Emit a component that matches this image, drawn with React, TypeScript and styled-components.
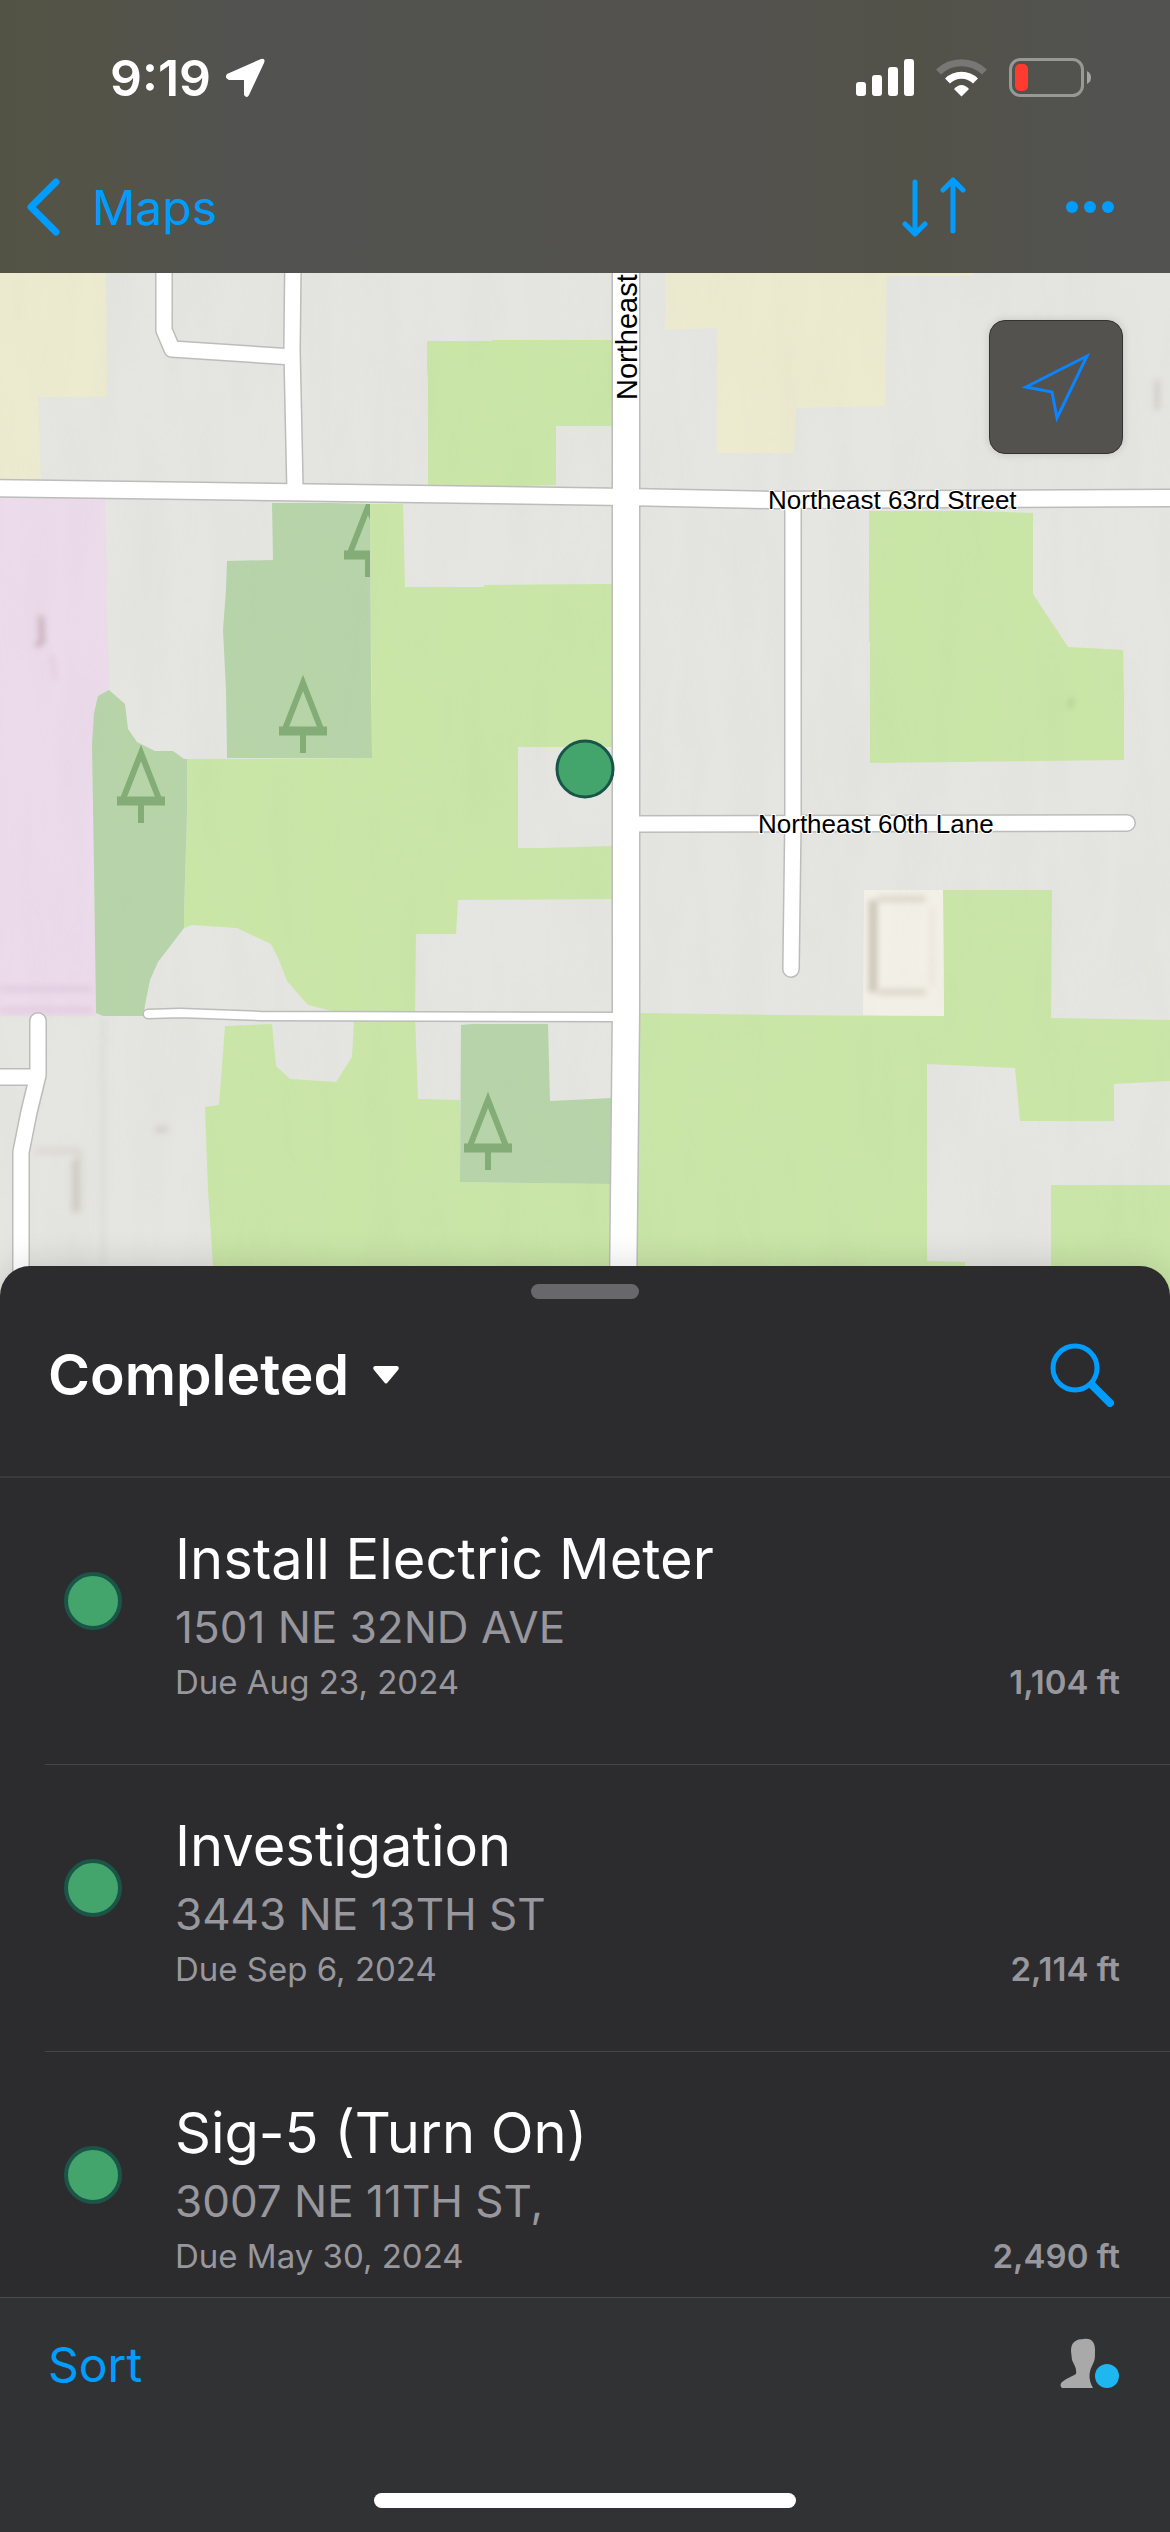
import React from "react";
import styled, { createGlobalStyle } from "styled-components";

type Task = {
    id: number;
    title: string;
    address: string;
    due: string;
    distance: string;
};

const tasks: Task[] = [
    { id: 1, title: "Install Electric Meter", address: "1501 NE 32ND AVE", due: "Due Aug 23, 2024", distance: "1,104 ft" },
    { id: 2, title: "Investigation", address: "3443 NE 13TH ST", due: "Due Sep 6, 2024", distance: "2,114 ft" },
    { id: 3, title: "Sig-5 (Turn On)", address: "3007 NE 11TH ST,", due: "Due May 30, 2024", distance: "2,490 ft" },
];

const farmland = [
    "427,341 492,341 492,340 612,340 612,426 556,426 556,485 524,486 428,486 428,380 427,368",
    "370,504 403,504 405,587 484,587 484,585 612,584 612,747 518,747 518,848 544,848 612,846 612,899 458,900 456,934 416,934 415,1015 332,1011 308,1005 287,981 279,960 271,944 237,928 192,925 184,928 184,913 187,813 187,759 372,758",
    "225,1026 272,1024 276,1066 290,1079 336,1082 352,1057 354,1022 354,1015 415,1015 418,1099 460,1100 460,1182 612,1184 612,1300 215,1300 213,1265 208,1190 205,1107 219,1105",
    "869,511 978,511 1033,513 1033,594 1068,647 1123,650 1124,698 1124,760 870,763 870,642 869,641",
    "638,1013 780,1015 892,1016 944,1016 943,890 1052,890 1051,1018 1170,1020 1170,1081 1114,1084 1114,1121 1020,1121 1015,1068 927,1064 927,1261 965,1262 965,1300 638,1300",
    "1051,1185 1170,1185 1170,1300 1051,1300",
];

const woodland = [
    "272,503 330,503 370,504 371,680 372,758 227,758 226,690 223,630 226,590 227,561 273,560",
    "109,690 98,696 94,713 92,744 94,870 96,1013 103,1016 143,1016 146,1000 150,980 158,962 184,928 184,913 187,813 187,759 184,759 173,751 155,751 137,742 128,729 125,704",
    "461,1025 472,1024 548,1024 550,1101 612,1098 612,1184 460,1182",
];

const roads = [
    { d: "M164 260V330L172 349L293 357", width: 15 },
    { d: "M293 260L292 350L295 490", width: 15 },
    { d: "M793 500V820L791 969", width: 15, round: true },
    { d: "M626 824L1127 823", width: 15, round: true },
    { d: "M148 1014L180 1013L260 1016L626 1017", width: 8, round: true },
    { d: "M0 1077H38", width: 15 },
    { d: "M38 1021V1075L29 1112L21 1152V1300", width: 15, round: true },
    { d: "M-10 488L626 497L770 500L1180 498", width: 16 },
    { d: "M626 260V1010L623 1300", width: 26 },
];

const Tree = ({ x, y }: { x: number; y: number }) => (
    <g transform={`translate(${x} ${y})`} fill="none" stroke="#84ac76">
        <path d="M-18 52L0 6L18 52" strokeWidth="6" />
        <path d="M-24 54H24" strokeWidth="9" />
        <path d="M0 56V76" strokeWidth="6" />
    </g>
);

const StreetMap = () => (
    <svg viewBox="0 273 1170 1023" preserveAspectRatio="xMidYMin slice" role="img" aria-label="Street map">
        <defs>
            <filter id="relief" x="0" y="0" width="100%" height="100%">
                <feTurbulence type="fractalNoise" baseFrequency="0.03 0.006" numOctaves="3" seed="4" />
                <feColorMatrix values="0 0 0 0 0.45  0 0 0 0 0.44  0 0 0 0 0.4  0.5 0 0 0 -0.17" />
            </filter>
            <filter id="soft" x="-50%" y="-50%" width="200%" height="200%">
                <feGaussianBlur stdDeviation="3" />
            </filter>
            <clipPath id="woodEdge">
                <rect x="272" y="504" width="98" height="254" />
            </clipPath>
        </defs>
        <rect y="273" width="1170" height="1040" fill="#e5e5e1" />
        <path d="M0 273H106L107 397H38L41 480H0Z" fill="#ecebd0" />
        <path d="M665 273H974V276H887L885 406L796 408L794 453H717V328L665 330Z" fill="#ecebd0" />
        <path d="M0 490H105L109 690L92 744L96 1016H0Z" fill="#ecdbeb" />
        {farmland.map((points) => (
            <polygon key={points} points={points} fill="#cae6a7" />
        ))}
        {woodland.map((points) => (
            <polygon key={points} points={points} fill="#b7d4a9" />
        ))}
        <path d="M864 890H943L944 1016L863 1015Z" fill="#f3f0e8" />
        <g filter="url(#soft)" fill="none">
            <path d="M878 899H926M878 992H926" stroke="#dcd6ca" strokeWidth="6" />
            <path d="M873 900V992" stroke="#cbc3b5" strokeWidth="8" />
            <path d="M932 906V986" stroke="#eae5db" strokeWidth="5" />
            <path d="M41 616L42 642L36 646" stroke="#c5a9b5" strokeWidth="5" />
            <path d="M52 655L55 680" stroke="#e0cbdc" strokeWidth="4" />
            <path d="M0 989H92M0 1010H92" stroke="#dfcbdd" strokeWidth="5" />
            <path d="M36 1151H79V1212" stroke="#d8d6cf" strokeWidth="5" />
            <path d="M75 1160V1212" stroke="#ccc8be" strokeWidth="5" />
            <path d="M103 1018V1266" stroke="#d9d8d3" strokeWidth="3" />
            <path d="M1157 380V410" stroke="#cfccc5" strokeWidth="5" />
            <path d="M155 1130L168 1129" stroke="#cfccc5" strokeWidth="5" />
            <path d="M1072 698L1070 708" stroke="#b5cf95" strokeWidth="5" />
        </g>
        <rect y="273" width="1170" height="1040" filter="url(#relief)" opacity="0.2" />
        <g clipPath="url(#woodEdge)">
            <Tree x={368} y={501} />
        </g>
        <Tree x={303} y={677} />
        <Tree x={141} y={747} />
        <Tree x={488} y={1094} />
        <g fill="none" strokeLinejoin="round">
            {roads.map(({ d, width, round }) => (
                <path key={d} d={d} stroke="#bcbcbb" strokeWidth={width + 3} strokeLinecap={round ? "round" : "butt"} />
            ))}
            {roads.map(({ d, width, round }) => (
                <path key={d} d={d} stroke="#fff" strokeWidth={width} strokeLinecap={round ? "round" : "butt"} />
            ))}
        </g>
        <StreetName x="768" y="509">Northeast 63rd Street</StreetName>
        <StreetName x="758" y="833">Northeast 60th Lane</StreetName>
        <StreetName $large transform="translate(637 400) rotate(-90)">Northeast</StreetName>
        <circle cx="585" cy="769" r="28" fill="#44a56c" stroke="#185549" strokeWidth="3" />
    </svg>
);

const App = () => (
    <>
        <GlobalStyle />
        <Page>
            <Header>
                <StatusBar>
                    <Clock>
                        9:19
                        <svg width="40" height="40" viewBox="0 0 40 40" fill="#fff" aria-hidden="true">
                            <path d="M36 1Q41 0 39 5L24 37Q22 41 19 37V22H4Q-1 20 2 16Z" />
                        </svg>
                    </Clock>
                    <StatusIcons>
                        <svg width="58" height="38" viewBox="0 0 58 38" fill="#fff" aria-hidden="true">
                            <rect y="23" width="10" height="14" rx="3" />
                            <rect x="16" y="16" width="10" height="21" rx="3" />
                            <rect x="32" y="8" width="10" height="29" rx="3" />
                            <rect x="48" width="10" height="37" rx="3" />
                        </svg>
                        <svg width="51" height="38" viewBox="0 0 51 38" fill="none" aria-hidden="true">
                            <path d="M2.500 13A33 33 0 0 1 48.500 13" stroke="#777775" strokeWidth="7" />
                            <path d="M11.500 22A20 20 0 0 1 39.500 22" stroke="#fff" strokeWidth="7" />
                            <path d="M18 30Q25.500 22 33 30L25.500 37.500Z" fill="#fff" />
                        </svg>
                        <svg width="83" height="40" viewBox="0 0 83 40" fill="none" aria-hidden="true">
                            <rect x="1.500" y="1.500" width="72" height="36" rx="10" stroke="#989896" strokeWidth="3" />
                            <rect x="6" y="6" width="13" height="27" rx="5" fill="#ff3b30" />
                            <path d="M78 13Q82 15 82 19.500T78 26Z" fill="#a4a4a2" />
                        </svg>
                    </StatusIcons>
                </StatusBar>
                <NavBar>
                    <BackLink href="#maps">
                        <svg width="36" height="60" viewBox="0 0 36 60" fill="none" aria-hidden="true">
                            <path d="M30 5L5 30L30 55" stroke="currentColor" strokeWidth="7" strokeLinecap="round" strokeLinejoin="round" />
                        </svg>
                        Maps
                    </BackLink>
                    <NavActions>
                        <IconButton aria-label="Change order">
                            <svg width="64" height="62" viewBox="0 0 64 62" fill="none" aria-hidden="true">
                                <path
                                    d="M13 6V57M3 48L13 58L23 48M51 55V4M41 14L51 4L61 14"
                                    stroke="currentColor"
                                    strokeWidth="5"
                                    strokeLinecap="round"
                                    strokeLinejoin="round"
                                />
                            </svg>
                        </IconButton>
                        <IconButton aria-label="More">
                            <svg width="48" height="12" viewBox="0 0 48 12" fill="currentColor" aria-hidden="true">
                                <circle cx="6" cy="6" r="6" />
                                <circle cx="24" cy="6" r="6" />
                                <circle cx="42" cy="6" r="6" />
                            </svg>
                        </IconButton>
                    </NavActions>
                </NavBar>
            </Header>

            <MapArea>
                <StreetMap />
                <LocateButton aria-label="Show my location">
                    <svg width="70" height="70" viewBox="0 0 70 70" fill="none" aria-hidden="true">
                        <path d="M5 35L66 4L36 66L31 40Z" stroke="currentColor" strokeWidth="3" />
                    </svg>
                </LocateButton>
            </MapArea>

            <Sheet>
                <Grip />
                <SheetHeader>
                    <Filter>
                        <select aria-label="Task status" defaultValue="Completed">
                            <option>Completed</option>
                        </select>
                        <svg width="26" height="18" viewBox="0 0 26 18" aria-hidden="true">
                            <path d="M2 0H24Q27 1 25 4L15 16Q13 19 11 16L1 4Q-1 1 2 0Z" fill="#fff" />
                        </svg>
                    </Filter>
                    <IconButton aria-label="Search">
                        <svg width="64" height="64" viewBox="0 0 64 64" fill="none" stroke="currentColor" aria-hidden="true">
                            <circle cx="25" cy="25" r="22" strokeWidth="5" />
                            <path d="M42 42L60 60" strokeWidth="8" strokeLinecap="round" />
                        </svg>
                    </IconButton>
                </SheetHeader>
                <TaskList>
                    {tasks.map((task) => (
                        <TaskRow key={task.id}>
                            <StatusDot />
                            <TaskText>
                                <TaskTitle>{task.title}</TaskTitle>
                                <Address>{task.address}</Address>
                                <Meta>
                                    <span>{task.due}</span>
                                    <strong>{task.distance}</strong>
                                </Meta>
                            </TaskText>
                        </TaskRow>
                    ))}
                </TaskList>
                <Footer>
                    <Toolbar>
                        <TextButton>Sort</TextButton>
                        <IconButton aria-label="Account">
                            <svg width="60" height="52" viewBox="0 0 60 52" aria-hidden="true">
                                <path
                                    d="M11 13C11 4 16 1 24 1C32 0 35 5 35 12C35 21 35 22 32 28C29 34 28 41 33 50H2Q-1 47 2 44C7 40 11 39 16 36C17 30 14 27 12 22Z"
                                    fill="#a9a9a9"
                                />
                                <circle cx="47" cy="38" r="12" fill="#1fb7f0" />
                            </svg>
                        </IconButton>
                    </Toolbar>
                    <HomeIndicator />
                </Footer>
            </Sheet>
        </Page>
    </>
);

const GlobalStyle = createGlobalStyle`
    * {
        box-sizing: border-box;
    }

    body {
        margin: 0;
        background: #2c2c2e;
        font-family: Inter, "Liberation Sans", sans-serif;
    }

    button,
    select {
        margin: 0;
        padding: 0;
        border: 0;
        background: none;
        color: inherit;
        font: inherit;
    }

    svg {
        display: block;
        flex-shrink: 0;
    }
`;

const Page = styled.main`
    display: flex;
    flex-direction: column;
    height: 100vh;
    overflow: hidden;
    color: #fff;
`;

const Header = styled.header`
    flex-shrink: 0;
    background: linear-gradient(90deg, #535345 0%, #535349 10%, #525350 20%, #53524f 60%, #535249 78%, #525250 94%);
`;

const StatusBar = styled.div`
    display: flex;
    align-items: center;
    justify-content: space-between;
    height: 141px;
    padding: 15px 78px 0 110px;
`;

const Clock = styled.div`
    display: flex;
    align-items: center;
    gap: 14px;
    font-size: 50px;
    font-weight: 600;
`;

const StatusIcons = styled.div`
    display: flex;
    align-items: center;
    gap: 22px;
`;

const NavBar = styled.nav`
    display: flex;
    align-items: center;
    justify-content: space-between;
    height: 132px;
    padding: 0 56px 0 26px;
    color: #009dff;
`;

const BackLink = styled.a`
    display: flex;
    align-items: center;
    gap: 30px;
    color: inherit;
    font-size: 48px;
    text-decoration: none;
`;

const NavActions = styled.div`
    display: flex;
    align-items: center;
    gap: 100px;
`;

const IconButton = styled.button`
    color: #009dff;
    cursor: pointer;
`;

const MapArea = styled.section`
    position: relative;
    flex: 1;
    min-height: 0;
    margin-bottom: -30px;

    > svg {
        width: 100%;
        height: 100%;
    }
`;

const StreetName = styled.text<{ $large?: boolean }>`
    font-family: "Liberation Sans", Arial, sans-serif;
    font-size: ${({ $large }) => ($large ? 29 : 26)}px;
    fill: #000;
    stroke: #fff;
    stroke-width: 2px;
    paint-order: stroke;
`;

const LocateButton = styled.button`
    position: absolute;
    top: 47px;
    right: 47px;
    display: grid;
    place-items: center;
    width: 134px;
    height: 134px;
    border: 1px solid #333;
    border-radius: 16px;
    background: #53524f;
    box-shadow: 0 0 8px rgba(0, 0, 0, 0.15);
    color: #0a84ff;
    cursor: pointer;
`;

const Sheet = styled.section`
    position: relative;
    display: flex;
    flex-direction: column;
    flex: 0 0 50%;
    min-height: 0;
    border-radius: 30px 30px 0 0;
    background: #2c2c2e;
    box-shadow: 0 0 36px rgba(0, 0, 0, 0.15);
`;

const Grip = styled.div`
    flex-shrink: 0;
    align-self: center;
    width: 108px;
    height: 15px;
    margin-top: 18px;
    border-radius: 8px;
    background: #68676c;
`;

const SheetHeader = styled.div`
    display: flex;
    align-items: center;
    justify-content: space-between;
    flex-shrink: 0;
    padding: 38px 56px 64px 48px;
    border-bottom: 2px solid #3a3a3c;
`;

const Filter = styled.label`
    display: flex;
    align-items: center;
    gap: 24px;

    select {
        height: 75px;
        appearance: none;
        font-size: 57px;
        font-weight: 600;
        line-height: 75px;
        field-sizing: content;
    }
`;

const TaskList = styled.ul`
    flex: 1;
    min-height: 0;
    margin: 0;
    padding: 0 0 0 45px;
    overflow: hidden;
    list-style: none;
`;

const TaskRow = styled.li`
    display: flex;
    gap: 53px;
    padding: 44px 50px 58px 19px;
    border-bottom: 1px solid #454547;
`;

const StatusDot = styled.span`
    flex-shrink: 0;
    width: 58px;
    height: 58px;
    margin-top: 50px;
    border: 4px solid #1a5548;
    border-radius: 50%;
    background: #44a56c;
`;

const TaskText = styled.div`
    flex: 1;
    min-width: 0;
`;

const TaskTitle = styled.h2`
    margin: 0;
    font-size: 56px;
    font-weight: 400;
    line-height: 74px;
`;

const Address = styled.p`
    margin: 0;
    color: #98979d;
    font-size: 44px;
    line-height: 62px;
`;

const Meta = styled.div`
    display: flex;
    justify-content: space-between;
    color: #98979d;
    font-size: 33px;
    line-height: 48px;

    strong {
        font-weight: 600;
    }
`;

const Footer = styled.footer`
    display: flex;
    flex-direction: column;
    justify-content: space-between;
    flex-shrink: 0;
    height: 235px;
    padding-bottom: 24px;
    border-top: 1px solid #4c4c4e;
    background: #313233;
`;

const Toolbar = styled.div`
    display: flex;
    align-items: center;
    justify-content: space-between;
    height: 132px;
    padding: 0 50px 0 48px;
`;

const TextButton = styled.button`
    color: #009dff;
    font-size: 48px;
    cursor: pointer;
`;

const HomeIndicator = styled.div`
    align-self: center;
    width: 36%;
    height: 15px;
    border-radius: 8px;
    background: #fff;
`;

export default App;
